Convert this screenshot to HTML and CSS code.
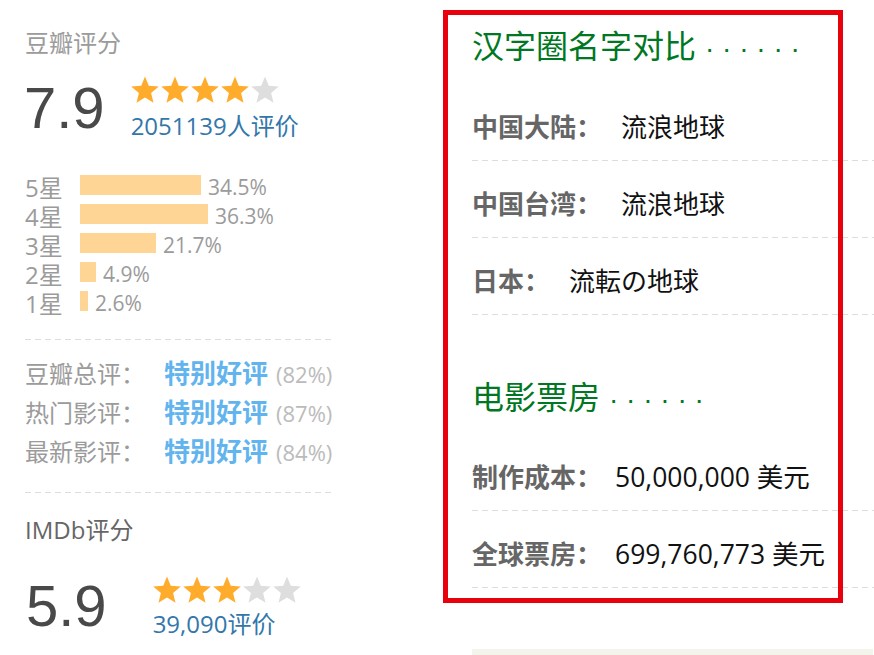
FILE: index.html
```html
<!DOCTYPE html>
<html lang="zh-CN">
<head>
  <meta charset="UTF-8">
  <meta name="viewport" content="width=device-width, initial-scale=1.0">
  <title>流浪地球 - 评分</title>
  <link rel="stylesheet" href="styles.css">
</head>
<body>

<div class="page">

  <!-- 评分 -->
  <section class="ratings">
    <div class="rating-logo">豆瓣评分</div>
    <div class="rating-self">
      <strong class="rating-num">7.9</strong>
      <div class="rating-right">
        <svg class="stars" width="150" height="28" viewBox="0 0 150 28">
          <polygon class="on" points="14,0.5 17.76,9.82 27.79,10.52 20.09,16.98 22.52,26.73 14,21.4 5.48,26.73 7.91,16.98 0.21,10.52 10.24,9.82"/>
          <polygon class="on" transform="translate(30 0)" points="14,0.5 17.76,9.82 27.79,10.52 20.09,16.98 22.52,26.73 14,21.4 5.48,26.73 7.91,16.98 0.21,10.52 10.24,9.82"/>
          <polygon class="on" transform="translate(60 0)" points="14,0.5 17.76,9.82 27.79,10.52 20.09,16.98 22.52,26.73 14,21.4 5.48,26.73 7.91,16.98 0.21,10.52 10.24,9.82"/>
          <polygon class="on" transform="translate(90 0)" points="14,0.5 17.76,9.82 27.79,10.52 20.09,16.98 22.52,26.73 14,21.4 5.48,26.73 7.91,16.98 0.21,10.52 10.24,9.82"/>
          <polygon class="off" transform="translate(120 0)" points="14,0.5 17.76,9.82 27.79,10.52 20.09,16.98 22.52,26.73 14,21.4 5.48,26.73 7.91,16.98 0.21,10.52 10.24,9.82"/>
        </svg>
        <a class="rating-people" href="#">2051139人评价</a>
      </div>
    </div>

    <div class="weights">
      <div class="item"><span class="star-label">5星</span><span class="bar" style="width:121px"></span><span class="pct">34.5%</span></div>
      <div class="item"><span class="star-label">4星</span><span class="bar" style="width:128px"></span><span class="pct">36.3%</span></div>
      <div class="item"><span class="star-label">3星</span><span class="bar" style="width:76px"></span><span class="pct">21.7%</span></div>
      <div class="item"><span class="star-label">2星</span><span class="bar" style="width:16px"></span><span class="pct">4.9%</span></div>
      <div class="item"><span class="star-label">1星</span><span class="bar" style="width:8px"></span><span class="pct">2.6%</span></div>
    </div>

    <div class="divider"></div>

    <div class="summary">
      <div class="sum-row"><span class="sum-label">豆瓣总评：</span><span class="sum-value">特别好评</span><span class="sum-pct">(82%)</span></div>
      <div class="sum-row"><span class="sum-label">热门影评：</span><span class="sum-value">特别好评</span><span class="sum-pct">(87%)</span></div>
      <div class="sum-row"><span class="sum-label">最新影评：</span><span class="sum-value">特别好评</span><span class="sum-pct">(84%)</span></div>
    </div>

    <div class="divider"></div>

    <div class="imdb-logo">IMDb评分</div>
    <div class="rating-self imdb-self">
      <strong class="rating-num">5.9</strong>
      <div class="rating-right">
        <svg class="stars" width="150" height="28" viewBox="0 0 150 28">
          <polygon class="on" points="14,0.5 17.76,9.82 27.79,10.52 20.09,16.98 22.52,26.73 14,21.4 5.48,26.73 7.91,16.98 0.21,10.52 10.24,9.82"/>
          <polygon class="on" transform="translate(30 0)" points="14,0.5 17.76,9.82 27.79,10.52 20.09,16.98 22.52,26.73 14,21.4 5.48,26.73 7.91,16.98 0.21,10.52 10.24,9.82"/>
          <polygon class="on" transform="translate(60 0)" points="14,0.5 17.76,9.82 27.79,10.52 20.09,16.98 22.52,26.73 14,21.4 5.48,26.73 7.91,16.98 0.21,10.52 10.24,9.82"/>
          <polygon class="off" transform="translate(90 0)" points="14,0.5 17.76,9.82 27.79,10.52 20.09,16.98 22.52,26.73 14,21.4 5.48,26.73 7.91,16.98 0.21,10.52 10.24,9.82"/>
          <polygon class="off" transform="translate(120 0)" points="14,0.5 17.76,9.82 27.79,10.52 20.09,16.98 22.52,26.73 14,21.4 5.48,26.73 7.91,16.98 0.21,10.52 10.24,9.82"/>
        </svg>
        <a class="rating-people" href="#">39,090评价</a>
      </div>
    </div>
  </section>

  <!-- 名字 / 票房 -->
  <section class="info">
    <h2>汉字圈名字对比<span class="dots">· · · · · ·</span></h2>
    <div class="info-row"><span class="pl">中国大陆：</span><span class="val">流浪地球</span></div>
    <div class="info-row"><span class="pl">中国台湾：</span><span class="val">流浪地球</span></div>
    <div class="info-row"><span class="pl">日本：</span><span class="val">流転の地球</span></div>

    <h2 class="second">电影票房<span class="dots">· · · · · ·</span></h2>
    <div class="info-row money"><span class="pl">制作成本：</span><span class="val">50,000,000 美元</span></div>
    <div class="info-row money"><span class="pl">全球票房：</span><span class="val">699,760,773 美元</span></div>

    <div class="next-box"></div>
  </section>

  <!-- 标注框 -->
  <div class="highlight"></div>

</div>

</body>
</html>
```

FILE: styles.css
```css
html, body {
  margin: 0;
  padding: 0;
  background: #fff;
  overflow: hidden;
}
body {
  font-family: "Open Sans", "Noto Sans CJK SC", sans-serif;
  color: #111;
}

.page {
  position: relative;
  display: flex;
  align-items: flex-start;
  padding-left: 25px;
  height: 655px;
}

/* Ratings */
.ratings {
  width: 310px;
  flex-shrink: 0;
}
.rating-logo {
  margin-top: 28px;
  font-size: 24px;
  line-height: 30px;
  color: #9b9b9b;
}
.rating-self {
  display: flex;
  align-items: flex-start;
  margin-top: 18px;
}
.rating-num {
  font-family: "Liberation Sans", Arial, sans-serif;
  font-weight: normal;
  font-size: 58px;
  line-height: 60px;
  color: #494949;
  margin: 2px 26px 0 -1px;
}
.rating-right {
  display: flex;
  flex-direction: column;
}
.stars {
  display: block;
}
.stars .on {
  fill: #ffac2d;
}
.stars .off {
  fill: #dedede;
}
.rating-people {
  margin-top: 7px;
  font-size: 24px;
  line-height: 30px;
  color: #37a;
  text-decoration: none;
}

/* Weights */
.weights {
  margin-top: 32px;
}
.item {
  display: flex;
  align-items: flex-start;
  height: 29px;
}
.star-label {
  width: 55px;
  font-size: 24px;
  line-height: 29px;
  color: #9b9b9b;
}
.bar {
  height: 20px;
  margin-top: 2px;
  background: #ffd596;
}
.pct {
  margin-left: 7px;
  font-size: 21px;
  line-height: 29px;
  color: #9b9b9b;
}

.divider {
  width: 310px;
  margin-top: 21px;
  height: 1px;
  background: repeating-linear-gradient(to right, #ddd 0 6px, transparent 6px 10px);
}

/* Summary */
.summary {
  margin-top: 14px;
}
.sum-row {
  display: flex;
  align-items: baseline;
  line-height: 39px;
  height: 39px;
  white-space: nowrap;
}
.sum-label {
  width: 139px;
  flex-shrink: 0;
  font-size: 24px;
  color: #9b9b9b;
}
.sum-value {
  font-size: 26px;
  font-weight: bold;
  color: #62b4ee;
}
.sum-pct {
  margin-left: 8px;
  font-size: 22px;
  color: #bbb;
}

/* IMDb */
.imdb-logo {
  margin-top: 22px;
  font-size: 24px;
  line-height: 30px;
  color: #666;
}
.imdb-self {
  margin-top: 31px;
}
.imdb-self .rating-num {
  margin: 0 46px 0 1px;
}
.imdb-self .rating-people {
  margin-top: 5px;
}

/* Info */
.info {
  margin-left: 137px;
  width: 420px;
  flex-shrink: 0;
}
.info h2 {
  margin: 26px 0 18px;
  font-size: 32px;
  line-height: 40px;
  font-weight: normal;
  color: #072;
  white-space: nowrap;
}
.info h2.second {
  margin: 62px 0 17px;
}
.dots {
  margin-left: 9px;
  font-family: "Liberation Sans", Arial, sans-serif;
  font-size: 28px;
  line-height: 20px;
}
.info-row {
  display: flex;
  padding: 28px 0 19px;
  font-size: 26px;
  line-height: 30px;
  white-space: nowrap;
  background: repeating-linear-gradient(to right, #ddd 0 6px, transparent 6px 10px) left bottom / 100% 1px no-repeat;
}
.pl {
  font-weight: bold;
  color: #666;
}
.val {
  margin-left: 19px;
  color: #111;
}
.money .val {
  margin-left: 13px;
  font-size: 26.5px;
}
.next-box {
  margin-top: 61px;
  width: 401px;
  height: 30px;
  background: #f4f3ec;
}

/* Highlight frame */
.highlight {
  position: absolute;
  left: 443px;
  top: 10px;
  width: 400px;
  height: 593px;
  box-sizing: border-box;
  border: 5px solid #e8000d;
  pointer-events: none;
}
```
